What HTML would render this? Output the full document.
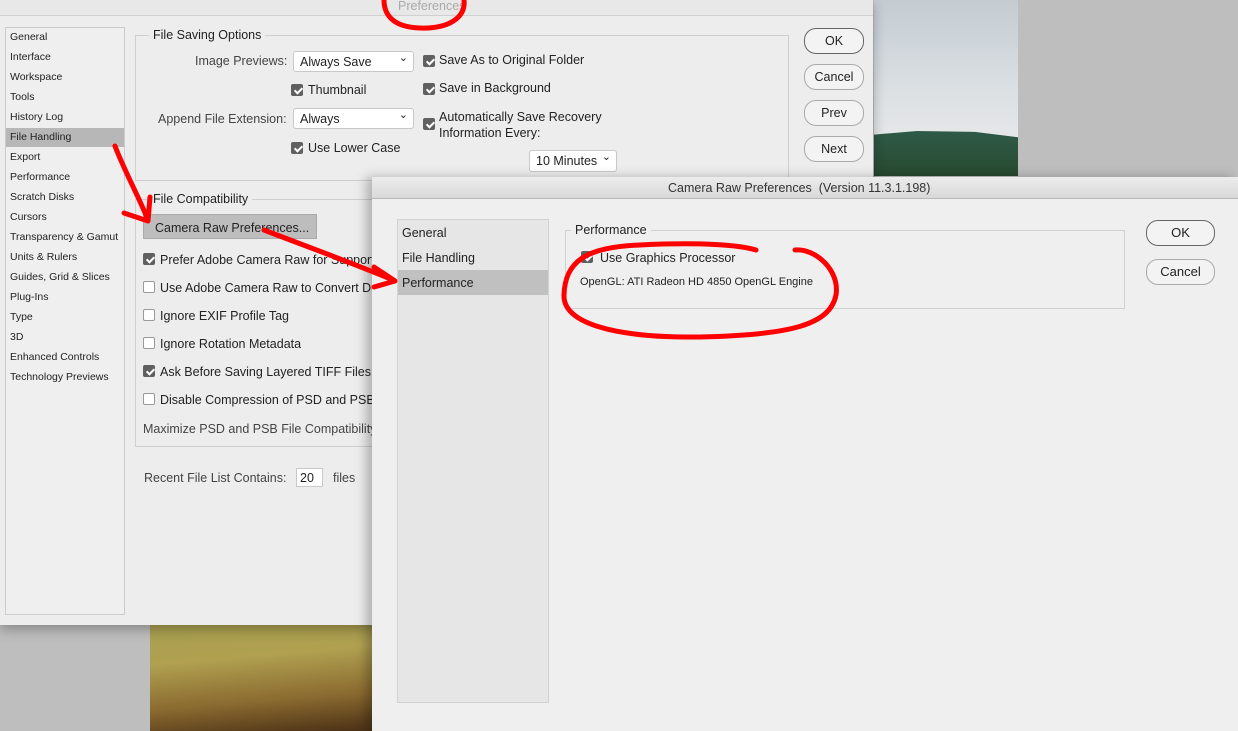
<!DOCTYPE html>
<html><head><meta charset="utf-8"><style>
*{margin:0;padding:0;box-sizing:border-box}
body{width:1238px;height:731px;overflow:hidden;background:#bebebe;font-family:"Liberation Sans",sans-serif;color:#222;position:relative}
.a{position:absolute;white-space:nowrap}
.s{font-size:10.5px}
.m{font-size:12.5px}
.cb{position:absolute;width:12px;height:12px;border-radius:2px;background:#fff;border:1px solid #9a9a9a}
.cb.on{background:#606060;border-color:#606060}
.cb.on::after{content:"";position:absolute;left:3.5px;top:1px;width:3px;height:6px;border:solid #fff;border-width:0 2px 2px 0;transform:rotate(45deg)}
.sel{position:absolute;background:#fff;border:1px solid #c8c8c8;border-radius:3px;font-size:12.5px;padding:3px 6px}
.sel::after{content:"⌄";position:absolute;right:5px;top:-1px;font-size:11px}
.btn{position:absolute;border:1px solid #aaa;border-radius:12px;background:#f3f3f3;text-align:center;font-size:12.5px}
</style></head><body>
<!-- landscape -->
<div class="a" style="left:874px;top:0;width:144px;height:176px;background:linear-gradient(#c4ccd2,#dfe3e6 60%,#e4e6e8 75%)"></div>
<div class="a" style="left:874px;top:131px;width:144px;height:45px;background:linear-gradient(#2f5a48,#284a30);clip-path:polygon(0 8%,30% 0,70% 2%,100% 14%,100% 100%,0 100%)"></div>
<!-- grass -->
<div class="a" style="left:150px;top:620px;width:222px;height:111px;background:linear-gradient(175deg,#a8a050,#b0a050 35%,#8a6a30 70%,#4a3015)"></div>

<!-- Preferences window -->
<div class="a" style="left:0;top:0;width:873px;height:625px;background:#ededed;box-shadow:0 4px 12px rgba(0,0,0,.3)"></div>
<div class="a" style="left:0;top:0;width:873px;height:16px;border-bottom:1px solid #d0d0d0;background:#e8e8e8"></div>
<div class="a m" style="left:398px;top:-1px;color:#aaa">Preferences</div>
<div class="a" style="left:5px;top:27px;width:120px;height:588px;background:#efefef;border:1px solid #cbcbcb"></div>
<div class="a" style="left:6px;top:128px;width:118px;height:19px;background:#b7b7b7"></div>
<div class="a s" style="left:10px;top:27px;line-height:20px">General<br>Interface<br>Workspace<br>Tools<br>History Log<br>File Handling<br>Export<br>Performance<br>Scratch Disks<br>Cursors<br>Transparency &amp; Gamut<br>Units &amp; Rulers<br>Guides, Grid &amp; Slices<br>Plug-Ins<br>Type<br>3D<br>Enhanced Controls<br>Technology Previews</div>

<div class="a" style="left:135px;top:35px;width:654px;height:146px;border:1px solid #cfcfcf"></div>
<div class="a m" style="left:149px;top:28px;background:#ededed;padding:0 4px">File Saving Options</div>
<div class="a m" style="left:195px;top:54px;color:#444">Image Previews:</div>
<div class="sel" style="left:293px;top:51px;width:121px;height:21px">Always Save</div>
<div class="cb on" style="left:423px;top:55px"></div><div class="a m" style="left:439px;top:53px">Save As to Original Folder</div>
<div class="cb on" style="left:291px;top:84px"></div><div class="a m" style="left:308px;top:83px">Thumbnail</div>
<div class="cb on" style="left:423px;top:83px"></div><div class="a m" style="left:439px;top:81px">Save in Background</div>
<div class="a m" style="left:158px;top:112px;color:#444">Append File Extension:</div>
<div class="sel" style="left:293px;top:108px;width:121px;height:21px">Always</div>
<div class="cb on" style="left:423px;top:118px"></div><div class="a m" style="left:439px;top:109px;line-height:16px">Automatically Save Recovery<br>Information Every:</div>
<div class="cb on" style="left:291px;top:142px"></div><div class="a m" style="left:308px;top:141px">Use Lower Case</div>
<div class="sel" style="left:529px;top:150px;width:88px;height:22px">10 Minutes</div>
<div class="btn" style="left:804px;top:28px;width:60px;height:26px;line-height:24px;border-color:#666">OK</div>
<div class="btn" style="left:804px;top:64px;width:60px;height:26px;line-height:24px">Cancel</div>
<div class="btn" style="left:804px;top:100px;width:60px;height:26px;line-height:24px">Prev</div>
<div class="btn" style="left:804px;top:136px;width:60px;height:26px;line-height:24px">Next</div>

<div class="a" style="left:135px;top:199px;width:654px;height:248px;border:1px solid #cfcfcf"></div>
<div class="a m" style="left:149px;top:192px;background:#ededed;padding:0 4px">File Compatibility</div>
<div class="a m" style="left:143px;top:214px;width:174px;height:25px;background:#bdbdbd;border:1px solid #aaa;padding:6px 0 0 11px">Camera Raw Preferences...</div>
<div class="cb on" style="left:143px;top:253px"></div><div class="a m" style="left:160px;top:253px">Prefer Adobe Camera Raw for Supported Raw Files</div>
<div class="cb" style="left:143px;top:281px"></div><div class="a m" style="left:160px;top:281px">Use Adobe Camera Raw to Convert Documents</div>
<div class="cb" style="left:143px;top:309px"></div><div class="a m" style="left:160px;top:309px">Ignore EXIF Profile Tag</div>
<div class="cb" style="left:143px;top:337px"></div><div class="a m" style="left:160px;top:337px">Ignore Rotation Metadata</div>
<div class="cb on" style="left:143px;top:365px"></div><div class="a m" style="left:160px;top:365px">Ask Before Saving Layered TIFF Files</div>
<div class="cb" style="left:143px;top:393px"></div><div class="a m" style="left:160px;top:393px">Disable Compression of PSD and PSB Files</div>
<div class="a m" style="left:143px;top:422px;color:#444">Maximize PSD and PSB File Compatibility</div>
<div class="a m" style="left:144px;top:471px;color:#444">Recent File List Contains:</div>
<div class="a m" style="left:296px;top:468px;width:27px;height:19px;background:#fff;border:1px solid #c8c8c8;padding:2px 3px">20</div>
<div class="a m" style="left:333px;top:471px;color:#444">files</div>

<!-- Camera Raw dialog -->
<div class="a" style="left:372px;top:177px;width:866px;height:554px;background:#efefef;box-shadow:-6px 0 10px rgba(0,0,0,.25)"></div>
<div class="a" style="left:372px;top:177px;width:866px;height:22px;background:linear-gradient(#ececec,#d9d9d9);border-bottom:1px solid #b8b8b8"></div>
<div class="a m" style="left:668px;top:181px;color:#333">Camera Raw Preferences&nbsp; (Version 11.3.1.198)</div>
<div class="a" style="left:397px;top:219px;width:152px;height:484px;background:#e6e6e6;border:1px solid #d2d2d2"></div>
<div class="a" style="left:398px;top:270px;width:150px;height:25px;background:#c0c0c0"></div>
<div class="a m" style="left:402px;top:221px;line-height:25px">General<br>File Handling<br>Performance</div>
<div class="a" style="left:565px;top:230px;width:560px;height:79px;border:1px solid #d0d0d0"></div>
<div class="a m" style="left:571px;top:223px;background:#efefef;padding:0 4px">Performance</div>
<div class="cb on" style="left:581px;top:251px"></div><div class="a m" style="left:600px;top:251px">Use Graphics Processor</div>
<div class="a" style="left:580px;top:276px;font-size:11px">OpenGL: ATI Radeon HD 4850 OpenGL Engine</div>
<div class="btn" style="left:1146px;top:220px;width:69px;height:26px;line-height:24px;border-color:#666;font-size:13px">OK</div>
<div class="btn" style="left:1146px;top:259px;width:69px;height:26px;line-height:24px;font-size:13px">Cancel</div>

<!-- red annotations -->
<svg class="a" style="left:0;top:0" width="1238" height="731" fill="none" stroke="#f00" stroke-width="5" stroke-linecap="round" stroke-linejoin="round">
<path d="M384,0 C384,14 392,27 420,28 C448,29 466,18 464,0"/>
<path d="M115,146 C124,170 138,195 148,220"/>
<path d="M124,213 L148,221 L150,197"/>
<path d="M264,230 C300,244 350,262 393,280"/>
<path d="M374,267 L395,281 L374,287"/>
<path d="M795,250 C815,248 840,270 836,295 C830,325 790,335 700,337 C610,338 563,322 564,295 C565,262 585,247 640,245 C700,242 740,245 756,250"/>
</svg>
</body></html>
